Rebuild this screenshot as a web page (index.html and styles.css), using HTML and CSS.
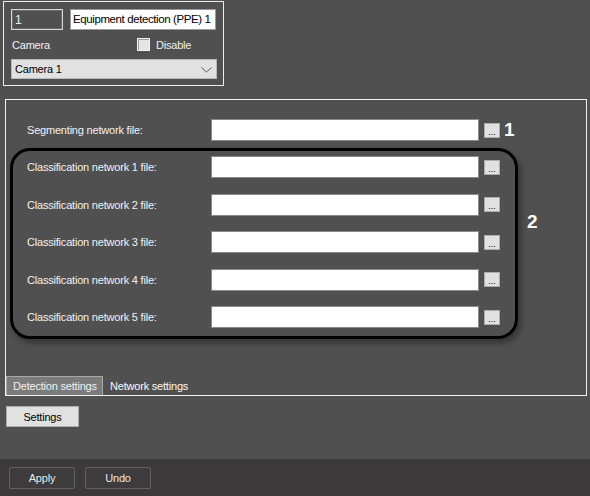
FILE: index.html
```html
<!DOCTYPE html>
<html>
<head>
<meta charset="utf-8">
<link rel="stylesheet" href="styles.css">
</head>
<body>
<div class="page">
  <div class="main">
    <div class="header">
      <div class="hrow">
        <div class="id-field">1</div>
        <div class="name-field">Equipment detection (PPE) 1</div>
      </div>
      <div class="hrow2">
        <span class="cam-lbl">Camera</span>
        <span class="chk"><span class="box"></span><span class="chk-txt">Disable</span></span>
      </div>
      <div class="select">
        <span>Camera 1</span>
        <svg class="chev" width="11" height="6" viewBox="0 0 11 6"><path d="M0.5 0.5 L5.5 5 L10.5 0.5" fill="none" stroke="#5a5a5a" stroke-width="1"/></svg>
      </div>
    </div>

    <div class="panel">
      <div class="row first">
        <span class="lbl">Segmenting network file:</span>
        <span class="inp"></span>
        <span class="dots">...</span>
        <span class="mark">1</span>
      </div>
      <div class="group-wrap">
        <div class="group">
          <div class="row"><span class="lbl">Classification network 1 file:</span><span class="inp"></span><span class="dots">...</span></div>
          <div class="row"><span class="lbl">Classification network 2 file:</span><span class="inp"></span><span class="dots">...</span></div>
          <div class="row"><span class="lbl">Classification network 3 file:</span><span class="inp"></span><span class="dots">...</span></div>
          <div class="row"><span class="lbl">Classification network 4 file:</span><span class="inp"></span><span class="dots">...</span></div>
          <div class="row"><span class="lbl">Classification network 5 file:</span><span class="inp"></span><span class="dots">...</span></div>
        </div>
        <div class="mark mark2">2</div>
      </div>
      <div class="tabs">
        <div class="tab active">Detection settings</div>
        <div class="tab">Network settings</div>
      </div>
    </div>

    <div class="settings-btn">Settings</div>
  </div>
  <div class="footer">
    <div class="fbtn">Apply</div>
    <div class="fbtn">Undo</div>
  </div>
</div>
</body>
</html>
```

FILE: styles.css
```css
* { box-sizing: border-box; }
html, body { margin: 0; padding: 0; }
body {
  background: #505050;
  font-family: "Liberation Sans", Arial, sans-serif;
  font-size: 11px;
  letter-spacing: -0.2px;
  color: #f0f0f0;
}
.page {
  width: 590px;
  height: 496px;
  display: flex;
  flex-direction: column;
}
.main { flex: 1; display: flex; flex-direction: column; align-items: flex-start; }

.header {
  margin: 1px 0 0 3px;
  width: 221px;
  height: 85px;
  border: 1px solid #ececec;
  padding: 7px 7px 0 7px;
}
.hrow { display: flex; gap: 7px; }
.id-field {
  width: 52px; height: 21px;
  border: 1px solid #d8d8d8;
  box-shadow: inset 0 0 0 1px #6a6a6a;
  padding: 3px 0 0 3px;
  font-size: 12px;
  color: #f0f0f0;
}
.name-field {
  width: 146px; height: 21px;
  background: #fff;
  border: 1px solid #9a9a9a;
  color: #000;
  padding: 3px 0 0 2px;
  font-size: 11.5px;
  letter-spacing: -0.4px;
  white-space: nowrap;
  overflow: hidden;
}
.hrow2 {
  display: flex; align-items: center;
  height: 29px;
  padding-left: 1px;
}
.cam-lbl { width: 125px; }
.chk { display: flex; align-items: center; }
.box {
  width: 13px; height: 13px;
  border: 1px solid #f4f4f4;
  background: #e4e4e4;
  box-shadow: inset 1px 1px 0 #9a9a9a;
  margin-right: 6px;
}
.chk-txt { font-size: 11px; }
.select {
  width: 206px; height: 20px;
  background: #e1e1e1;
  border: 1px solid #b8b8b8;
  color: #000;
  display: flex; align-items: center; justify-content: space-between;
  padding: 0 4px 0 3px;
}
.chev { margin-top: 1px; }

.panel {
  margin: 13px 0 0 5px;
  width: 582px;
  height: 297px;
  border: 1px solid #f0f0f0;
  padding-top: 19px;
  display: flex; flex-direction: column;
}
.row { display: flex; align-items: center; height: 22px; }
.row.first { padding-left: 21px; }
.lbl { width: 184px; color: #f2f2f2; }
.inp {
  width: 268px; height: 22px;
  background: #fff;
  border: 1px solid #8a8a8a;
}
.dots {
  width: 16px; height: 15px;
  margin-left: 5px;
  background: #e1e1e1;
  border: 1px solid #adadad;
  color: #000;
  font-size: 9px;
  line-height: 16px;
  text-align: center;
  letter-spacing: 0;
}
.mark {
  font-weight: bold;
  font-size: 19px;
  line-height: 22px;
  color: #fff;
  letter-spacing: 0;
}
.row.first .mark { margin-left: 4px; }

.group-wrap { display: flex; align-items: flex-start; margin-top: 7px; margin-left: 4px; }
.group {
  width: 508px;
  border: 3px solid #000;
  border-radius: 20px;
  padding: 5px 15px 8px 14px;
  display: flex; flex-direction: column; gap: 15.5px;
  box-shadow: 3px 4px 6px rgba(0,0,0,0.35);
}
.mark2 { margin: 63px 0 0 9px; }

.tabs { margin-top: auto; display: flex; align-items: stretch; height: 19px; }
.tab { display: flex; align-items: center; }
.tab.active {
  width: 97px;
  background: #7b7b7b;
  border: 1px solid #a8a8a8;
  border-bottom: none;
  padding-left: 6px;
  color: #f0f0f0;
}
.tab + .tab { margin-left: 7px; color: #fafafa; }

.settings-btn {
  margin: 10px 0 0 6px;
  width: 73px; height: 21px;
  background: #e1e1e1;
  border: 1px solid #adadad;
  color: #000;
  display: flex; align-items: center; justify-content: center;
}

.footer {
  height: 37px;
  background: #3b3939;
  display: flex; gap: 10px;
  padding: 8px 0 0 9px;
}
.fbtn {
  width: 66px; height: 22px;
  border: 1px solid #626060;
  border-radius: 2px;
  background: #3d3b3b;
  color: #e8e8e8;
  display: flex; align-items: center; justify-content: center;
}
```
